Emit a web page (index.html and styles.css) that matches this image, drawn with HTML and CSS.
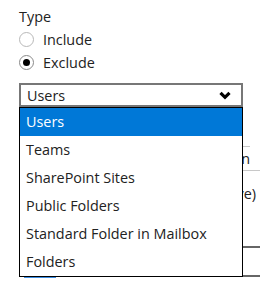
FILE: index.html
```html
<!DOCTYPE html>
<html>
<head>
<meta charset="utf-8">
<link rel="stylesheet" href="styles.css">
</head>
<body>
<div class="panel">
  <div class="label">Type</div>
  <label class="radio"><span class="circle"></span>Include</label>
  <label class="radio"><span class="circle checked"></span>Exclude</label>
  <div class="select-wrap">
    <div class="select">
      <span>Users</span>
      <svg class="chev" width="12" height="9" viewBox="0 0 12 9"><polyline points="1.5,1.8 6,6.3 10.5,1.8" fill="none" stroke="#000" stroke-width="3.2"/></svg>
    </div>
    <ul class="menu">
      <li class="active">Users</li>
      <li>Teams</li>
      <li>SharePoint Sites</li>
      <li>Public Folders</li>
      <li>Standard Folder in Mailbox</li>
      <li>Folders</li>
    </ul>
  </div>
  <div class="behind">
    <div class="row first"><span class="rtext">Condition</span></div>
    <div class="row second"><span class="rtext">(Case Sensitive)</span></div>
    <div class="row third">
      <svg class="ico" width="32" height="13" viewBox="0 0 32 13">
        <rect width="32" height="13" fill="#3b8de3"/>
        <g fill="#fff">
          <rect x="3" y="1" width="3" height="2"/><rect x="9" y="1" width="3" height="2"/><rect x="15" y="1" width="3" height="2"/><rect x="21" y="1" width="3" height="2"/><rect x="27" y="1" width="3" height="2"/>
          <rect x="6" y="3" width="3" height="2"/><rect x="12" y="3" width="3" height="2"/><rect x="18" y="3" width="3" height="2"/><rect x="24" y="3" width="3" height="2"/>
          <rect x="3" y="5" width="3" height="1"/><rect x="9" y="5" width="3" height="1"/><rect x="15" y="5" width="3" height="1"/><rect x="21" y="5" width="3" height="1"/><rect x="27" y="5" width="3" height="1"/>
        </g>
      </svg>
      <div class="box"></div>
    </div>
  </div>
</div>
</body>
</html>
```
FILE: styles.css
```css
html, body {
  margin: 0;
  padding: 0;
  background: #fff;
  overflow: hidden;
}
body {
  font-family: "Open Sans", "Noto Sans", sans-serif;
  font-size: 14.4px;
  color: #222;
}
.panel {
  padding: 5px 0 0 19px;
}
.label {
  line-height: 23px;
}
.radio {
  display: flex;
  align-items: center;
  height: 23px;
  line-height: 23px;
}
.circle {
  box-sizing: border-box;
  width: 15px;
  height: 15px;
  border-radius: 50%;
  border: 1.5px solid #b8b8b8;
  margin-right: 9px;
  display: flex;
  align-items: center;
  justify-content: center;
}
.circle.checked {
  border-color: #8a8a8a;
}
.circle.checked::after {
  content: "";
  width: 7px;
  height: 7px;
  border-radius: 50%;
  background: #000;
}
.select-wrap {
  position: relative;
  margin-top: 9px;
  width: 224px;
  z-index: 2;
}
.select {
  box-sizing: border-box;
  height: 24px;
  border: 2px solid #777;
  display: flex;
  align-items: center;
  justify-content: space-between;
  padding: 0 10px 0 6px;
  background: #fff;
}
.chev {
  display: block;
  margin-top: 1px;
}
.menu {
  position: absolute;
  left: 0;
  top: 24px;
  width: 224px;
  box-sizing: border-box;
  margin: 0;
  padding: 0;
  list-style: none;
  border: 1px solid #000;
  background: #fff;
}
.menu li {
  height: 28px;
  line-height: 28px;
  padding-left: 6px;
  white-space: nowrap;
}
.menu li.active {
  background: #0078d7;
  color: #fff;
}
.behind {
  margin-top: 39px;
  width: 241px;
}
.row {
  border-top: 1px solid #c8c8c8;
  white-space: nowrap;
}
.first {
  height: 23px;
  line-height: 23px;
  width: 231px;
  text-align: right;
}
.second {
  height: 76px;
  line-height: 23px;
  padding-top: 11px;
  box-sizing: border-box;
  text-align: right;
  padding-right: 4px;
}
.third {
  border-top: none;
  display: flex;
  align-items: flex-start;
  padding-left: 5px;
}
.ico {
  display: block;
  margin-top: 19px;
  flex: none;
}
.box {
  margin-left: 11px;
  flex: 1;
  height: 31px;
  border: 2px solid #666;
  border-right: none;
  box-sizing: border-box;
}
```
